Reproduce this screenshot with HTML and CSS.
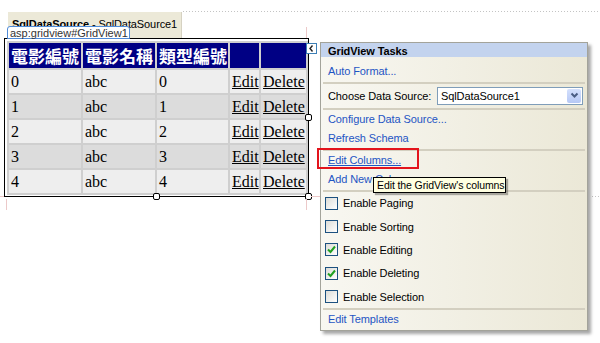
FILE: index.html
```html
<!DOCTYPE html>
<html lang="zh-Hant">
<head>
	<meta charset="UTF-8">
	<title>GridView Tasks</title>
	<link rel="stylesheet" href="styles.css">
</head>
<body>
	<div class="surface">
		<div class="ds-row">
			<div class="ds-tab"><b>SqlDataSource</b> - SqlDataSource1</div>
			<div class="ds-rule"></div>
		</div>
		<div class="gv">
			<span class="gv-label">asp:gridview#GridView1</span>
			<table class="grid">
				<colgroup>
					<col class="c-wide"><col class="c-wide"><col class="c-type"><col class="c-edit"><col class="c-del">
				</colgroup>
				<thead>
					<tr><th>電影編號</th><th>電影名稱</th><th>類型編號</th><th></th><th></th></tr>
				</thead>
				<tbody>
					<tr><td>0</td><td>abc</td><td>0</td><td><a href="#">Edit</a></td><td><a href="#">Delete</a></td></tr>
					<tr><td>1</td><td>abc</td><td>1</td><td><a href="#">Edit</a></td><td><a href="#">Delete</a></td></tr>
					<tr><td>2</td><td>abc</td><td>2</td><td><a href="#">Edit</a></td><td><a href="#">Delete</a></td></tr>
					<tr><td>3</td><td>abc</td><td>3</td><td><a href="#">Edit</a></td><td><a href="#">Delete</a></td></tr>
					<tr><td>4</td><td>abc</td><td>4</td><td><a href="#">Edit</a></td><td><a href="#">Delete</a></td></tr>
				</tbody>
			</table>
			<i class="handle h-right"></i>
			<i class="handle h-bottom"></i>
			<i class="handle h-corner"></i>
		</div>
	</div>

	<!-- designer guide marks -->
	<i class="guide g1"></i>
	<i class="guide g2"></i>
	<i class="guide g3"></i>
	<i class="guide g4"></i>
	<i class="guide g5"></i>
	<i class="guide-dots g6"></i>

	<button class="tag-btn" type="button">
		<svg width="9" height="9" viewBox="0 0 9 9"><polyline points="5.5,1.5 3,4.5 5.5,7.5" fill="none" stroke="#222" stroke-width="1.4"/></svg>
	</button>

	<div class="smart">
		<div class="smart-head">GridView Tasks</div>
		<div class="smart-body">
			<a class="task-link" href="#">Auto Format...</a>
			<div class="sep"></div>
			<div class="choose">
				<span>Choose Data Source:</span>
				<div class="ds-select">
					<span>SqlDataSource1</span>
					<span class="ds-drop">
						<svg width="9" height="7" viewBox="0 0 9 7"><polyline points="1.5,1.5 4.5,4.5 7.5,1.5" fill="none" stroke="#4a5d83" stroke-width="2"/></svg>
					</span>
				</div>
			</div>
			<div class="sep"></div>
			<a class="task-link" href="#">Configure Data Source...</a>
			<a class="task-link" href="#">Refresh Schema</a>
			<div class="sep"></div>
			<a class="task-link hot" href="#">Edit Columns...</a>
			<a class="task-link" href="#">Add New Column...</a>
			<div class="sep"></div>
			<label class="check"><span class="box"></span>Enable Paging</label>
			<label class="check"><span class="box"></span>Enable Sorting</label>
			<label class="check"><span class="box"><svg width="11" height="11" viewBox="0 0 11 11"><polyline points="2,5.5 4.5,8 9,2.5" fill="none" stroke="#21a121" stroke-width="2"/></svg></span>Enable Editing</label>
			<label class="check"><span class="box"><svg width="11" height="11" viewBox="0 0 11 11"><polyline points="2,5.5 4.5,8 9,2.5" fill="none" stroke="#21a121" stroke-width="2"/></svg></span>Enable Deleting</label>
			<label class="check"><span class="box"></span>Enable Selection</label>
			<div class="sep"></div>
			<a class="task-link" href="#">Edit Templates</a>
		</div>
	</div>

	<div class="mark"></div>
	<div class="tooltip">Edit the GridView's columns</div>
</body>
</html>
```

FILE: styles.css
```css
*{
	margin:0;
	padding:0;
	box-sizing:border-box;
}
body{
	width:600px;
	height:343px;
	position:relative;
	overflow:hidden;
	background:#fff;
	font-family:"Liberation Sans", Arial, sans-serif;
	font-size:11px;
	color:#000;
}
.surface{
	padding-top:11px;
}
.ds-row{
	display:flex;
	height:27px;
}
.ds-tab{
	margin:1px 0 0 8px;
	width:174px;
	height:26px;
	padding:6px 0 0 4px;
	background:#ece9d8;
	border-right:1px solid #d6d2c2;
	white-space:nowrap;
	overflow:hidden;
	letter-spacing:-0.1px;
}
.ds-rule{
	flex:1;
	height:1px;
	margin-left:1px;
	background:repeating-linear-gradient(to right, #c4c4c4 0 1px, transparent 1px 3px);
}
.gv{
	position:relative;
	margin-left:4px;
	width:305px;
	border:1px solid #000;
	padding:2px 2px 1px 2px;
}
.gv-label{
	position:absolute;
	left:2px;
	top:-13px;
	width:123px;
	height:13px;
	padding-left:2px;
	line-height:12px;
	background:#fff;
	border:1px solid #4f8bd9;
	border-radius:3px 3px 0 0;
	color:#333;
	white-space:nowrap;
}
.grid{
	width:299px;
	border-collapse:collapse;
	table-layout:fixed;
	font-family:"Liberation Serif", "Times New Roman", serif;
	font-size:16px;
}
.c-wide{ width:74px; }
.c-type{ width:73px; }
.c-edit{ width:31px; }
.c-del{ width:47px; }
.grid th, .grid td{
	height:25px;
	padding:0 0 0 2px;
	border:2px solid #cfcfcf;
	text-align:left;
	vertical-align:middle;
	white-space:nowrap;
	overflow:hidden;
}
.grid th{
	background:#000084;
	color:#fff;
	font-family:"Liberation Serif", "Noto Sans CJK TC", serif;
	font-size:17px;
	font-weight:bold;
}
.grid tbody tr{ background:#eeeeee; }
.grid tbody tr:nth-child(even){ background:#dcdcdc; }
.grid a{
	color:#000;
	text-decoration:underline;
}
.handle{
	position:absolute;
	width:7px;
	height:7px;
	border:1px solid #000;
	border-radius:2px;
	background:#fff;
}
.h-right{ right:-4px; top:75px; }
.h-bottom{ left:calc(50% - 4px); bottom:-4px; }
.h-corner{ right:-4px; bottom:-4px; }

.guide{
	position:absolute;
	background:#ecc9c9;
}
.g1{ left:306px; top:27px; width:1px; height:11px; }
.g2{ left:6px; top:199px; width:1px; height:11px; }
.g3{ left:306px; top:199px; width:1px; height:11px; }
.g4{ left:0; top:196px; width:4px; height:1px; }
.g5{ left:311px; top:196px; width:9px; height:1px; }
.guide-dots{
	position:absolute;
	height:1px;
	background:repeating-linear-gradient(to right, #c4c4c4 0 1px, transparent 1px 3px);
}
.g6{ left:592px; top:196px; width:8px; }

.tag-btn{
	position:absolute;
	left:306px;
	top:43px;
	width:11px;
	height:11px;
	border:1px solid #3d7fb6;
	background:#fff;
	display:flex;
	align-items:center;
	justify-content:center;
}
.smart{
	position:absolute;
	left:320px;
	top:42px;
	width:268px;
	height:289px;
	border:1px solid #a3a39a;
	background:linear-gradient(to right, #f8f7f1, #ebe8d7);
	box-shadow:3px 3px 3px rgba(0,0,0,.35);
	letter-spacing:-0.1px;
}
.smart-head{
	height:14px;
	line-height:16px;
	padding-left:7px;
	background:#c3d3ee;
	font-weight:bold;
}
.smart-body{
	padding:5px 2px 1px;
}
.task-link{
	display:block;
	height:19.5px;
	line-height:19.5px;
	padding-left:5px;
	color:#1f55c4;
	text-decoration:none;
}
.task-link.hot{
	text-decoration:underline;
}
.sep{
	height:2px;
	background:#d3cfc0;
}
.choose{
	display:flex;
	align-items:center;
	height:24px;
	padding-left:5px;
}
.ds-select{
	display:flex;
	align-items:center;
	margin-left:auto;
	margin-right:2px;
	width:146px;
	height:18px;
	padding-left:3px;
	border:1px solid #7f9db9;
	background:#fff;
}
.ds-drop{
	display:flex;
	align-items:center;
	justify-content:center;
	margin-left:auto;
	margin-right:1px;
	width:14px;
	height:14px;
	border-radius:2px;
	background:linear-gradient(#d4e0fc, #b6c8f5);
}
.check{
	display:flex;
	align-items:center;
	height:23.4px;
	padding-left:2px;
}
.box{
	display:flex;
	align-items:center;
	justify-content:center;
	width:13px;
	height:13px;
	margin-right:5px;
	border:1px solid #1c5180;
	background:linear-gradient(135deg, #dcdcd7, #fff);
}
.mark{
	position:absolute;
	left:317px;
	top:148px;
	width:102px;
	height:21px;
	border:2px solid #e3141c;
}
.tooltip{
	position:absolute;
	left:373px;
	top:177px;
	width:133px;
	height:16px;
	padding-left:3px;
	line-height:14px;
	font-size:10.5px;
	letter-spacing:-0.1px;
	background:#ffffe1;
	border:1px solid #000;
	box-shadow:2px 2px 1px rgba(0,0,0,.3);
	white-space:nowrap;
}
```
